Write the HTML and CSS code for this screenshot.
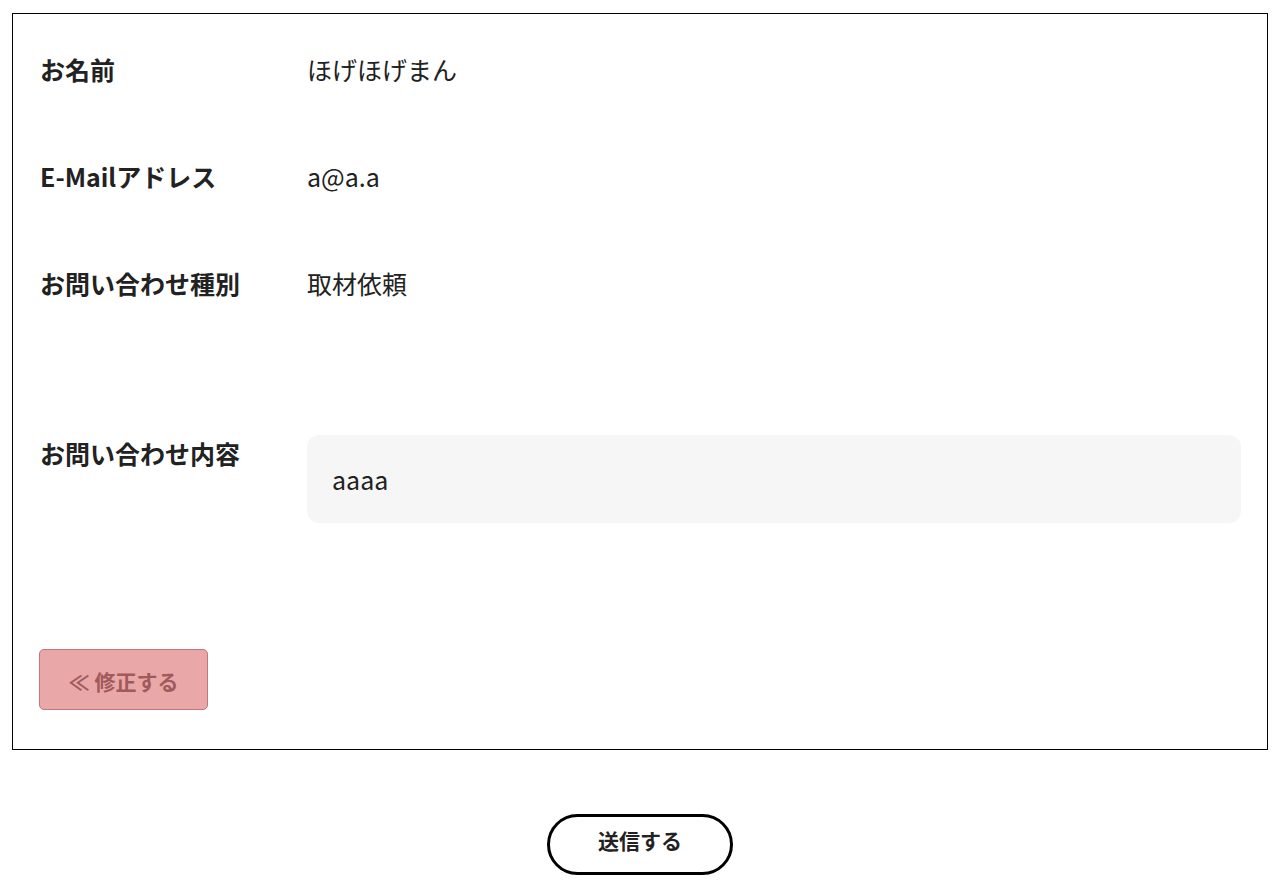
FILE: index.html
```html
<!DOCTYPE html>
<html lang="ja">
<head>
  <meta charset="UTF-8">
  <meta name="viewport" content="width=device-width, initial-scale=1.0">
  <title>お問い合わせ確認</title>
  <link rel="stylesheet" href="styles.css">
</head>
<body>
  <form class="confirm-form" onsubmit="event.preventDefault();">
    <div class="confirm-box">
      <div class="confirm-row">
        <div class="confirm-label">お名前</div>
        <div class="confirm-value">ほげほげまん</div>
      </div>

      <div class="confirm-row">
        <div class="confirm-label">E-Mailアドレス</div>
        <div class="confirm-value">a@a.a</div>
      </div>

      <div class="confirm-row">
        <div class="confirm-label">お問い合わせ種別</div>
        <div class="confirm-value">取材依頼</div>
      </div>

      <div class="confirm-row confirm-row-message">
        <div class="confirm-label">お問い合わせ内容</div>
        <div class="confirm-value">
          <div class="message-box">aaaa</div>
        </div>
      </div>

      <button type="button" class="back-button">≪ 修正する</button>
    </div>

    <div class="submit-area">
      <button type="submit" class="submit-button">送信する</button>
    </div>
  </form>
</body>
</html>
```

FILE: styles.css
```css
/* Basic Reset */
* {
  margin: 0;
  padding: 0;
  box-sizing: border-box;
}

body {
  font-family: "Noto Sans CJK JP", "Noto Sans", sans-serif;
  background-color: #ffffff;
  color: #222;
  padding: 13px 12px;
}

.confirm-box {
  border: 1px solid #000;
  padding: 37px 26px 39px 27px;
}

.confirm-row {
  display: flex;
  align-items: flex-start;
  font-size: 25px;
  line-height: 36px;
  margin-bottom: 71px;
}

/* margins collapse with the row above, so this is the full gap */
.confirm-row-message {
  margin-top: 134px;
  margin-bottom: 126px;
}

.confirm-label {
  width: 267px;
  flex-shrink: 0;
  font-weight: bold;
}

.confirm-value {
  flex: 1;
}

.message-box {
  background-color: #f6f6f6;
  border-radius: 12px;
  padding: 26px 26px 26px 25px;
  min-height: 88px;
}

.back-button {
  display: block;
  width: 169px;
  height: 61px;
  margin-left: -1px;
  background-color: #e9a7a8;
  color: #a05a5c;
  border: 1px solid #c27677;
  border-radius: 5px;
  font-family: inherit;
  font-size: 21px;
  font-weight: bold;
  padding-top: 2px;
  cursor: pointer;
}

.submit-area {
  text-align: center;
  padding-top: 64px;
}

.submit-button {
  width: 186px;
  height: 61px;
  background-color: #fff;
  color: #222;
  border: 3px solid #000;
  border-radius: 31px;
  font-family: inherit;
  font-size: 21px;
  font-weight: bold;
  padding-bottom: 10px;
  cursor: pointer;
}
```
